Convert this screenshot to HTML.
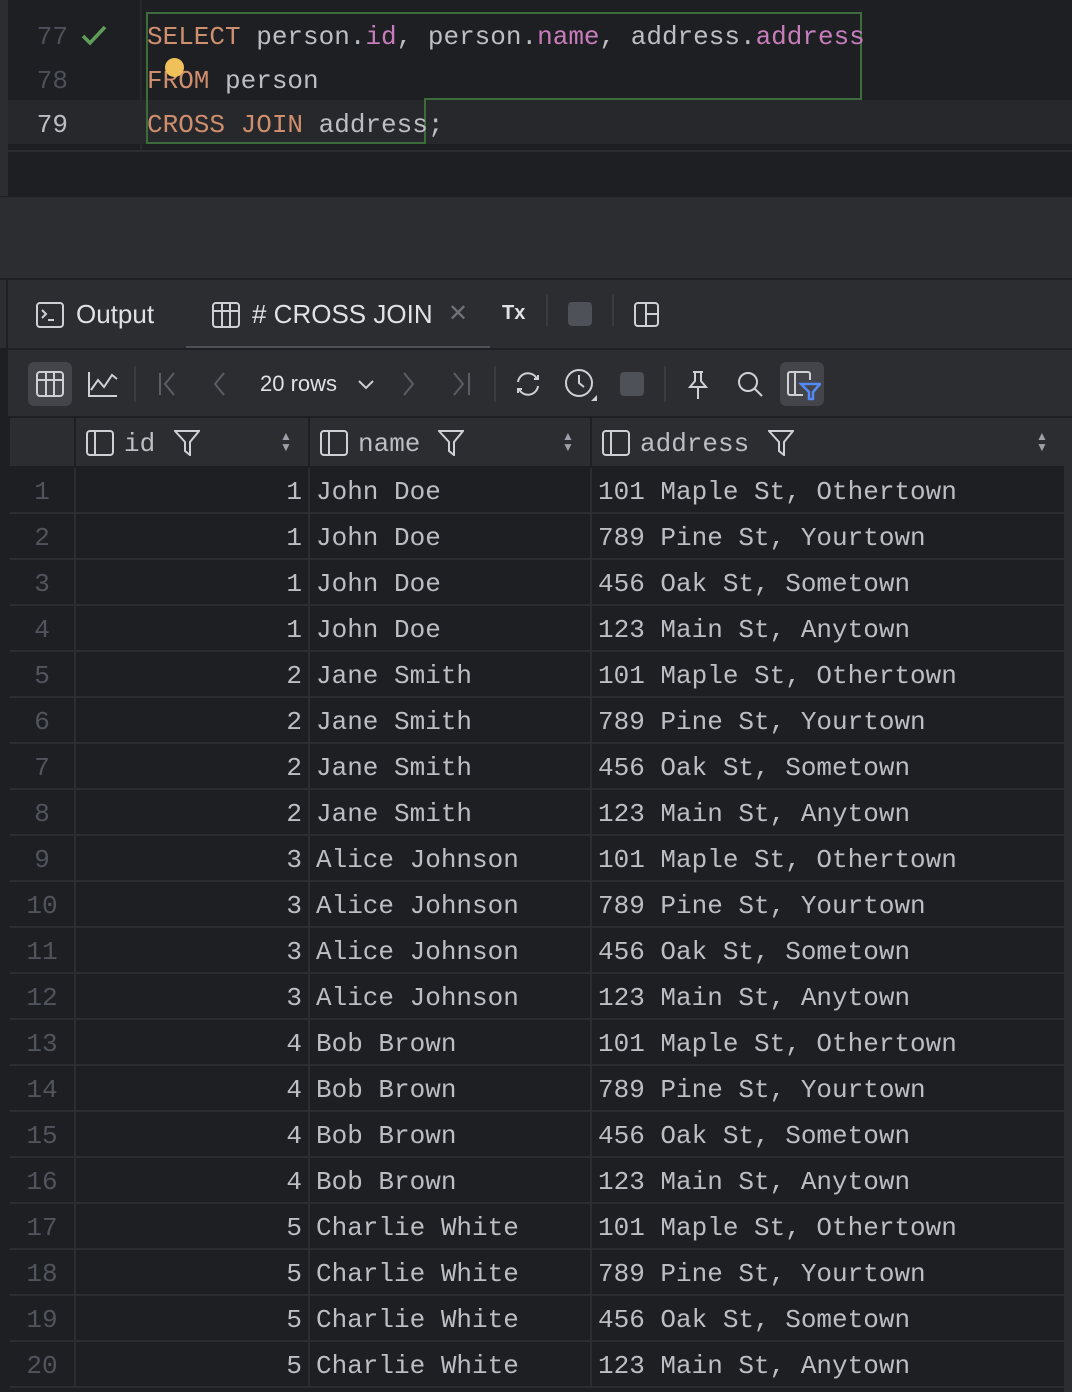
<!DOCTYPE html>
<html><head><meta charset="utf-8"><style>
*{margin:0;padding:0;box-sizing:border-box}
body{width:1072px;height:1392px;background:#1e1f22;overflow:hidden;position:relative;font-family:"Liberation Sans",sans-serif;color:#dfe1e5}
.a{position:absolute}
.mono{font-family:"Liberation Mono",monospace;font-size:26px;white-space:pre}
.kw{color:#cf8e6d}.pu{color:#c77dbb}.tx{color:#bcbec4}
.ln{color:#4b5059;text-align:right;width:40px}
.row{position:absolute;left:10px;width:1054px;height:46px;border-bottom:2px solid #2b2d30;background:#1e1f22}
.row span{position:absolute;top:9px;font-family:"Liberation Mono",monospace;font-size:26px;white-space:pre;color:#bcbec4}
.row .n{left:0;width:64px;text-align:center;color:#50545c}
.row .i{left:66px;width:226px;text-align:right}
.row .m{left:306px}.row .d{left:588px}
.vl{position:absolute;top:418px;width:2px;height:970px;background:#2b2d30}
svg{position:absolute;fill:none;stroke:#ced0d6;stroke-width:2}
</style></head><body>
<!-- editor -->
<div class="a" style="left:0;top:0;width:8px;height:196px;background:#2b2d30"></div>
<div class="a" style="left:140px;top:0;width:2px;height:152px;background:#26282b"></div>
<div class="a" style="left:8px;top:100px;width:1064px;height:44px;background:#26282b"></div>
<div class="a" style="left:8px;top:150px;width:1064px;height:2px;background:#2b2d30"></div>
<div class="a mono ln" style="left:28px;top:22px">77</div>
<div class="a mono ln" style="left:28px;top:66px">78</div>
<div class="a mono ln" style="left:28px;top:110px;color:#bcbec4">79</div>
<svg style="left:80px;top:24px" width="28" height="24" viewBox="0 0 28 24"><path d="M3 12l7 7L25 3" stroke="#5f9e58" stroke-width="3.5"/></svg>
<div class="a" style="left:146px;top:12px;width:716px;height:88px;border:2px solid #3d6b3a;border-bottom:none"></div>
<div class="a" style="left:146px;top:98px;width:280px;height:46px;border:2px solid #3d6b3a;border-top:none"></div>
<div class="a" style="left:424px;top:98px;width:438px;height:2px;background:#3d6b3a"></div>
<div class="a mono" style="left:147px;top:22px"><span class="kw">SELECT</span><span class="tx"> person.</span><span class="pu">id</span><span class="tx">, person.</span><span class="pu">name</span><span class="tx">, address.</span><span class="pu">address</span></div>
<div class="a mono" style="left:147px;top:66px"><span class="kw">FROM</span><span class="tx"> person</span></div>
<div class="a mono" style="left:147px;top:110px"><span class="kw">CROSS JOIN</span><span class="tx"> address;</span></div>
<div class="a" style="left:165px;top:58px;width:19px;height:19px;border-radius:50%;background:#f0c15a"></div>
<div class="a" style="left:0;top:197px;width:1072px;height:82px;background:#2b2d30"></div>
<div class="a" style="left:0;top:278px;width:1072px;height:2px;background:#1e1f22"></div>
<!-- tab bar -->
<div class="a" style="left:0;top:280px;width:1072px;height:68px;background:#2b2d30"></div>
<div class="a" style="left:6px;top:280px;width:2px;height:1112px;background:#1e1f22"></div>
<svg style="left:36px;top:302px" width="28" height="26" viewBox="0 0 28 26"><rect x="1" y="1" width="26" height="24" rx="3"/><path d="M6 8l4 4-4 4M12 18h6"/></svg>
<div class="a" style="left:76px;top:299px;font-size:26px">Output</div>
<svg style="left:212px;top:302px" width="28" height="26" viewBox="0 0 28 26"><rect x="1" y="1" width="26" height="24" rx="3"/><path d="M1 9h26M10 1v24M18 1v24"/></svg>
<div class="a" style="left:252px;top:299px;font-size:26px"># CROSS JOIN</div>
<div class="a" style="left:448px;top:299px;font-size:24px;color:#6f737a">✕</div>
<div class="a" style="left:186px;top:346px;width:304px;height:4px;background:#4e5157"></div>
<div class="a" style="left:502px;top:302px;font-size:20px;font-weight:bold">Tx</div>
<div class="a" style="left:546px;top:294px;width:2px;height:32px;background:#393b40"></div>
<div class="a" style="left:568px;top:302px;width:24px;height:24px;border-radius:4px;background:#4e5157"></div>
<div class="a" style="left:612px;top:294px;width:2px;height:32px;background:#393b40"></div>
<svg style="left:634px;top:302px" width="26" height="26" viewBox="0 0 26 26"><rect x="1" y="1" width="23" height="23" rx="3"/><path d="M12 1v23M12 12h12"/></svg>
<div class="a" style="left:8px;top:348px;width:1064px;height:2px;background:#1e1f22"></div>
<!-- toolbar -->
<div class="a" style="left:8px;top:350px;width:1064px;height:66px;background:#2b2d30"></div>
<div class="a" style="left:28px;top:362px;width:44px;height:44px;border-radius:6px;background:#43454a"></div>
<svg style="left:36px;top:370px" width="28" height="28" viewBox="0 0 28 28"><rect x="1" y="2" width="26" height="24" rx="3"/><path d="M1 10h26M10 2v24M18 2v24"/></svg>
<svg style="left:88px;top:370px" width="30" height="28" viewBox="0 0 30 28"><path d="M1 2v24h28M3 20l7-10 6 7 8-12 5 4"/></svg>
<div class="a" style="left:134px;top:366px;width:2px;height:36px;background:#393b40"></div>
<svg style="left:158px;top:372px" width="20" height="24" viewBox="0 0 20 24" style="stroke:#5a5d63"><path d="M2 1v22M16 1L7 12l9 11" stroke="#5a5d63"/></svg>
<svg style="left:212px;top:372px" width="14" height="24" viewBox="0 0 14 24"><path d="M12 1L3 12l9 11" stroke="#5a5d63"/></svg>
<div class="a" style="left:260px;top:371px;font-size:22px">20 rows</div>
<svg style="left:358px;top:380px" width="16" height="10" viewBox="0 0 16 10"><path d="M1 1l7 7 7-7"/></svg>
<svg style="left:402px;top:372px" width="14" height="24" viewBox="0 0 14 24"><path d="M2 1l9 11-9 11" stroke="#5a5d63"/></svg>
<svg style="left:452px;top:372px" width="20" height="24" viewBox="0 0 20 24"><path d="M2 1l9 11-9 11M17 1v22" stroke="#5a5d63"/></svg>
<div class="a" style="left:494px;top:366px;width:2px;height:36px;background:#393b40"></div>
<svg style="left:512px;top:370px" width="32" height="28" viewBox="0 0 32 28"><path d="M6 12a10 10 0 0 1 19-3M26 16a10 10 0 0 1-19 3M22 9h4V5M10 19H6v4"/></svg>
<svg style="left:564px;top:368px" width="34" height="34" viewBox="0 0 34 34"><circle cx="15" cy="15" r="13"/><path d="M15 7v8l5 4"/><path d="M33 27v6h-6z" fill="#ced0d6" stroke="none"/></svg>
<div class="a" style="left:620px;top:372px;width:24px;height:24px;border-radius:4px;background:#4e5157"></div>
<div class="a" style="left:664px;top:366px;width:2px;height:36px;background:#393b40"></div>
<svg style="left:686px;top:370px" width="24" height="30" viewBox="0 0 24 30"><path d="M7 2h10M9 2v9l-5 6h16l-5-6V2M12 17v12"/></svg>
<svg style="left:736px;top:370px" width="28" height="28" viewBox="0 0 28 28"><circle cx="12" cy="12" r="9"/><path d="M18 18l8 8"/></svg>
<div class="a" style="left:780px;top:362px;width:44px;height:44px;border-radius:6px;background:#43454a"></div>
<svg style="left:787px;top:371px" width="34" height="30" viewBox="0 0 34 30"><path d="M16 24H3a2 2 0 0 1-2-2V3a2 2 0 0 1 2-2h18a2 2 0 0 1 2 2v6M8 1v23"/><path d="M14 13h19l-7 8v7h-4v-7z" stroke="#548af7" stroke-width="2.5"/></svg>
<!-- header -->
<div class="a" style="left:8px;top:416px;width:1064px;height:2px;background:#1e1f22"></div>
<div class="a" style="left:10px;top:418px;width:1054px;height:48px;background:#2b2d30"></div>
<div class="a" style="left:1064px;top:418px;width:8px;height:974px;background:#2b2d30"></div>
<div class="a" style="left:74px;top:418px;width:2px;height:48px;background:#1e1f22"></div>
<div class="a" style="left:308px;top:418px;width:2px;height:48px;background:#1e1f22"></div>
<div class="a" style="left:590px;top:418px;width:2px;height:48px;background:#1e1f22"></div>
<svg style="left:86px;top:430px" width="28" height="26" viewBox="0 0 28 26"><rect x="1" y="1" width="26" height="24" rx="3"/><path d="M9 1v24"/></svg>
<div class="a mono" style="left:124px;top:429px;color:#bcbec4">id</div>
<svg style="left:174px;top:430px" width="26" height="26" viewBox="0 0 26 26"><path d="M1 1h24l-9 11v13l-5-4v-9z"/></svg>
<div class="a" style="left:280px;top:431px;font-size:12px;line-height:11px;color:#9da0a8">▲<br>▼</div>
<svg style="left:320px;top:430px" width="28" height="26" viewBox="0 0 28 26"><rect x="1" y="1" width="26" height="24" rx="3"/><path d="M9 1v24"/></svg>
<div class="a mono" style="left:358px;top:429px;color:#bcbec4">name</div>
<svg style="left:438px;top:430px" width="26" height="26" viewBox="0 0 26 26"><path d="M1 1h24l-9 11v13l-5-4v-9z"/></svg>
<div class="a" style="left:562px;top:431px;font-size:12px;line-height:11px;color:#9da0a8">▲<br>▼</div>
<svg style="left:602px;top:430px" width="28" height="26" viewBox="0 0 28 26"><rect x="1" y="1" width="26" height="24" rx="3"/><path d="M9 1v24"/></svg>
<div class="a mono" style="left:640px;top:429px;color:#bcbec4">address</div>
<svg style="left:768px;top:430px" width="26" height="26" viewBox="0 0 26 26"><path d="M1 1h24l-9 11v13l-5-4v-9z"/></svg>
<div class="a" style="left:1036px;top:431px;font-size:12px;line-height:11px;color:#9da0a8">▲<br>▼</div>
<!-- rows -->
<div class="row" style="top:468px"><span class="n">1</span><span class="i">1</span><span class="m">John Doe</span><span class="d">101 Maple St, Othertown</span></div>
<div class="row" style="top:514px"><span class="n">2</span><span class="i">1</span><span class="m">John Doe</span><span class="d">789 Pine St, Yourtown</span></div>
<div class="row" style="top:560px"><span class="n">3</span><span class="i">1</span><span class="m">John Doe</span><span class="d">456 Oak St, Sometown</span></div>
<div class="row" style="top:606px"><span class="n">4</span><span class="i">1</span><span class="m">John Doe</span><span class="d">123 Main St, Anytown</span></div>
<div class="row" style="top:652px"><span class="n">5</span><span class="i">2</span><span class="m">Jane Smith</span><span class="d">101 Maple St, Othertown</span></div>
<div class="row" style="top:698px"><span class="n">6</span><span class="i">2</span><span class="m">Jane Smith</span><span class="d">789 Pine St, Yourtown</span></div>
<div class="row" style="top:744px"><span class="n">7</span><span class="i">2</span><span class="m">Jane Smith</span><span class="d">456 Oak St, Sometown</span></div>
<div class="row" style="top:790px"><span class="n">8</span><span class="i">2</span><span class="m">Jane Smith</span><span class="d">123 Main St, Anytown</span></div>
<div class="row" style="top:836px"><span class="n">9</span><span class="i">3</span><span class="m">Alice Johnson</span><span class="d">101 Maple St, Othertown</span></div>
<div class="row" style="top:882px"><span class="n">10</span><span class="i">3</span><span class="m">Alice Johnson</span><span class="d">789 Pine St, Yourtown</span></div>
<div class="row" style="top:928px"><span class="n">11</span><span class="i">3</span><span class="m">Alice Johnson</span><span class="d">456 Oak St, Sometown</span></div>
<div class="row" style="top:974px"><span class="n">12</span><span class="i">3</span><span class="m">Alice Johnson</span><span class="d">123 Main St, Anytown</span></div>
<div class="row" style="top:1020px"><span class="n">13</span><span class="i">4</span><span class="m">Bob Brown</span><span class="d">101 Maple St, Othertown</span></div>
<div class="row" style="top:1066px"><span class="n">14</span><span class="i">4</span><span class="m">Bob Brown</span><span class="d">789 Pine St, Yourtown</span></div>
<div class="row" style="top:1112px"><span class="n">15</span><span class="i">4</span><span class="m">Bob Brown</span><span class="d">456 Oak St, Sometown</span></div>
<div class="row" style="top:1158px"><span class="n">16</span><span class="i">4</span><span class="m">Bob Brown</span><span class="d">123 Main St, Anytown</span></div>
<div class="row" style="top:1204px"><span class="n">17</span><span class="i">5</span><span class="m">Charlie White</span><span class="d">101 Maple St, Othertown</span></div>
<div class="row" style="top:1250px"><span class="n">18</span><span class="i">5</span><span class="m">Charlie White</span><span class="d">789 Pine St, Yourtown</span></div>
<div class="row" style="top:1296px"><span class="n">19</span><span class="i">5</span><span class="m">Charlie White</span><span class="d">456 Oak St, Sometown</span></div>
<div class="row" style="top:1342px"><span class="n">20</span><span class="i">5</span><span class="m">Charlie White</span><span class="d">123 Main St, Anytown</span></div>
<div class="vl" style="left:74px;top:468px;height:920px"></div><div class="vl" style="left:308px;top:468px;height:920px"></div><div class="vl" style="left:590px;top:468px;height:920px"></div>
</body></html>
